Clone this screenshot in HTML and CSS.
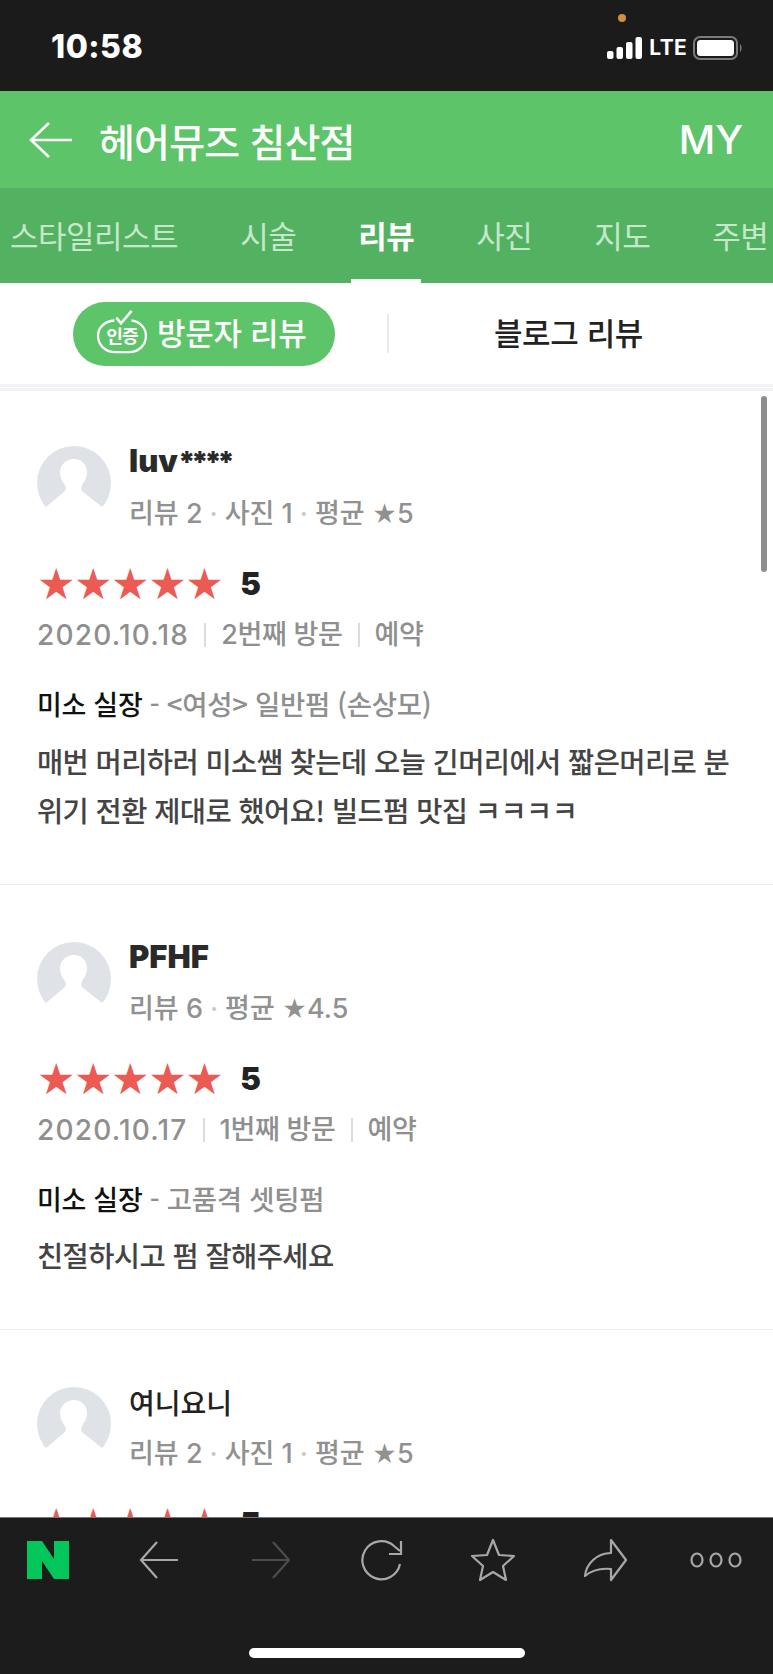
FILE: index.html
```html
<!DOCTYPE html>
<html lang="ko">
<head>
<meta charset="utf-8">
<title>헤어뮤즈 침산점 리뷰</title>
<link rel="stylesheet" href="styles.css">
</head>
<body>
<div class="phone">
  <div class="status">
    <span class="time">10:58</span>
    <span class="dot"></span>
    <div class="status-right">
      <svg class="signal" width="36" height="24" viewBox="0 0 36 24"><rect x="0" y="15" width="6.5" height="8" rx="2"/><rect x="9.5" y="11" width="6.5" height="12" rx="2"/><rect x="19" y="6" width="6.5" height="17" rx="2"/><rect x="28.5" y="1" width="6.5" height="22" rx="2"/></svg>
      <span class="lte">LTE</span>
      <svg class="battery" width="50" height="26" viewBox="0 0 50 26"><rect x="1" y="2" width="43" height="22" rx="6" fill="none" stroke="#7b7b7b" stroke-width="2"/><rect x="4" y="5" width="37" height="16" rx="3.5" fill="#fff"/><path d="M47 9c2 1 2 7 0 8z" fill="#7b7b7b"/></svg>
    </div>
  </div>

  <header class="top">
    <svg class="back" width="46" height="38" viewBox="0 0 46 38"><path d="M44 19H3M21 2 3 19l18 17" fill="none" stroke="#fff" stroke-width="2.6"/></svg>
    <h1 class="title">헤어뮤즈 침산점</h1>
    <span class="my">MY</span>
  </header>

  <nav class="tabs">
    <span class="tab">스타일리스트</span>
    <span class="tab">시술</span>
    <span class="tab active">리뷰</span>
    <span class="tab">사진</span>
    <span class="tab">지도</span>
    <span class="tab">주변</span>
  </nav>

  <div class="switch">
    <div class="switch-side switch-left">
      <div class="pill">
        <svg class="cert" width="54" height="48" viewBox="0 0 54 48"><path d="M21 9 26 15 37 2" fill="none" stroke="#fff" stroke-width="2.6"/><path d="M19 12C8 13 2 20 2 28c0 10 8 17 18 17h14c10 0 18-7 18-17 0-8-6-15-15-16" fill="none" stroke="#fff" stroke-width="2.4"/><text x="27" y="35" class="cert-text">인증</text></svg>
        <span class="pill-label">방문자 리뷰</span>
      </div>
    </div>
    <div class="switch-line"></div>
    <div class="switch-side switch-right"><span class="blog">블로그 리뷰</span></div>
  </div>

  <main class="list">
    <div class="scrollbar"></div>

    <article class="review">
      <div class="user">
        <svg class="avatar" viewBox="0 0 74 74"><circle cx="37" cy="37" r="37" fill="#dfe2e6"/><path d="M37 13c8 0 13 6 13 13 0 6-3 10-5 13-1 2-1 4 0 6l20 16v14H9V61l19-16c1-2 1-4 0-6-2-3-5-7-5-13 0-7 6-13 14-13z" fill="#fff"/></svg>
        <div class="user-info">
          <div class="name heavy">luv<span class="mask">****</span></div>
          <div class="meta">리뷰 2<i>·</i>사진 1<i>·</i>평균 <em>★</em>5</div>
        </div>
      </div>
      <div class="rating"><span class="stars">★★★★★</span><b>5</b></div>
      <div class="visit"><span class="date">2020.10.18</span><span>2번째 방문</span><span>예약</span></div>
      <div class="staff"><b>미소 실장</b> - &lt;여성&gt; 일반펌 (손상모)</div>
      <p class="body">매번 머리하러 미소쌤 찾는데 오늘 긴머리에서 짧은머리로 분위기 전환 제대로 했어요! 빌드펌 맛집 ㅋㅋㅋㅋ</p>
    </article>

    <article class="review">
      <div class="user">
        <svg class="avatar" viewBox="0 0 74 74"><circle cx="37" cy="37" r="37" fill="#dfe2e6"/><path d="M37 13c8 0 13 6 13 13 0 6-3 10-5 13-1 2-1 4 0 6l20 16v14H9V61l19-16c1-2 1-4 0-6-2-3-5-7-5-13 0-7 6-13 14-13z" fill="#fff"/></svg>
        <div class="user-info">
          <div class="name heavy">PFHF</div>
          <div class="meta">리뷰 6<i>·</i>평균 <em>★</em>4.5</div>
        </div>
      </div>
      <div class="rating"><span class="stars">★★★★★</span><b>5</b></div>
      <div class="visit"><span class="date">2020.10.17</span><span>1번째 방문</span><span>예약</span></div>
      <div class="staff"><b>미소 실장</b> - 고품격 셋팅펌</div>
      <p class="body">친절하시고 펌 잘해주세요</p>
    </article>

    <article class="review">
      <div class="user">
        <svg class="avatar" viewBox="0 0 74 74"><circle cx="37" cy="37" r="37" fill="#dfe2e6"/><path d="M37 13c8 0 13 6 13 13 0 6-3 10-5 13-1 2-1 4 0 6l20 16v14H9V61l19-16c1-2 1-4 0-6-2-3-5-7-5-13 0-7 6-13 14-13z" fill="#fff"/></svg>
        <div class="user-info">
          <div class="name">여니요니</div>
          <div class="meta">리뷰 2<i>·</i>사진 1<i>·</i>평균 <em>★</em>5</div>
        </div>
      </div>
      <div class="rating"><span class="stars">★★★★★</span><b>5</b></div>
    </article>
  </main>

  <footer class="bottom">
    <div class="toolbar">
      <span class="tool"><svg width="42" height="38" viewBox="0 0 42 38"><path d="M0 0h15l12 18V0h15v38H27L15 20v18H0z" fill="#03c75a"/></svg></span>
      <span class="tool"><svg width="40" height="40" viewBox="0 0 40 40"><path d="M39 20H2M18 2 2 20l16 18" fill="none" stroke="#a8a8a8" stroke-width="2.2"/></svg></span>
      <span class="tool"><svg width="40" height="40" viewBox="0 0 40 40"><path d="M1 20h37M22 2l16 18-16 18" fill="none" stroke="#4c4c4c" stroke-width="2.2"/></svg></span>
      <span class="tool"><svg width="44" height="44" viewBox="0 0 44 44"><path d="M40 26a19 19 0 1 1-6-18l6 5" fill="none" stroke="#a8a8a8" stroke-width="2.2"/><path d="M41 3v13H29" fill="none" stroke="#a8a8a8" stroke-width="2.2"/></svg></span>
      <span class="tool"><svg width="46" height="44" viewBox="0 0 46 44"><path d="M23 2l6 15 15 1-11 10 3 14-13-8-13 8 3-14L2 18l15-1z" fill="none" stroke="#a8a8a8" stroke-width="2.2" stroke-linejoin="round"/></svg></span>
      <span class="tool"><svg width="46" height="44" viewBox="0 0 46 44"><path d="M29 2l15 20-15 20V31c-10-1-19 1-26 7 1-12 12-23 26-23z" fill="none" stroke="#a8a8a8" stroke-width="2.2" stroke-linejoin="round"/></svg></span>
      <span class="tool"><svg width="52" height="16" viewBox="0 0 52 16"><g fill="none" stroke="#a8a8a8" stroke-width="2.2"><ellipse cx="7" cy="8" rx="5.5" ry="6.5"/><ellipse cx="26" cy="8" rx="5.5" ry="6.5"/><ellipse cx="45" cy="8" rx="5.5" ry="6.5"/></g></svg></span>
    </div>
    <div class="home"></div>
  </footer>
</div>
</body>
</html>
```

FILE: styles.css
```css
* { box-sizing: border-box; }
html, body { margin: 0; padding: 0; }
body {
  width: 773px;
  height: 1674px;
  overflow: hidden;
  font-family: "Noto Sans CJK KR", "Noto Sans", sans-serif;
  color: #222;
  background: #fff;
}
.phone { display: flex; flex-direction: column; height: 1674px; position: relative; }

.status {
  height: 91px;
  background: #1b1b1b;
  color: #fff;
  display: flex;
  align-items: center;
  justify-content: space-between;
  padding: 0 30px 0 51px;
  flex: none;
}
.time { font: 800 32px "Inter", sans-serif; letter-spacing: 0.5px; position: relative; top: 1px; }
.dot { position: absolute; left: 618px; top: 14px; width: 8px; height: 8px; border-radius: 50%; background: #d18f3f; }
.status-right { display: flex; align-items: center; gap: 6px; position: relative; top: 2px; }
.signal { fill: #fff; }
.lte { font: 700 21px "Inter", sans-serif; letter-spacing: 0.3px; }

.top {
  height: 97px;
  background: #5dc469;
  display: flex;
  align-items: center;
  padding: 0 30px 0 28px;
  color: #fff;
  flex: none;
}
.back { flex: none; }
.title { margin: 0 0 0 25px; font-size: 39px; font-weight: 500; flex: 1; letter-spacing: -0.8px; }
.my { font: 500 40px "Inter", sans-serif; }

.tabs {
  height: 95px;
  background: #53b262;
  display: flex;
  align-items: center;
  gap: 62px;
  padding: 0 0 0 10px;
  flex: none;
  overflow: hidden;
  white-space: nowrap;
}
.tab {
  color: #c7e7cb;
  font-size: 31px;
  line-height: 93px;
  height: 95px;
  position: relative;
  flex: none;
  letter-spacing: -0.5px;
}
.tab.active { color: #fff; font-weight: 700; }
.tab.active::after {
  content: "";
  position: absolute;
  left: -7px;
  right: -7px;
  bottom: 0;
  height: 4px;
  background: #fff;
}

.switch {
  height: 104px;
  display: flex;
  align-items: center;
  flex: none;
  border-bottom: 3px solid #f3f3f6;
}
.switch-side { flex: 1; display: flex; }
.switch-left { flex: none; width: 387px; padding-left: 73px; }
.switch-right { padding-left: 105px; }
.switch-line { width: 2px; height: 39px; background: #eaeaea; flex: none; }
.pill {
  width: 262px;
  height: 64px;
  border-radius: 32px;
  background: #5dc469;
  color: #fff;
  font-size: 31px;
  font-weight: 500;
  display: flex;
  align-items: center;
  padding-left: 22px;
  gap: 8px;
  letter-spacing: -0.3px;
}
.pill-label { padding-bottom: 4px; }
.cert { width: 54px; height: 46px; position: relative; top: -2px; flex: none; }
.cert-text { font-size: 19px; font-weight: 700; fill: #fff; text-anchor: middle; letter-spacing: -1px; }
.blog { font-size: 31px; font-weight: 500; color: #222; letter-spacing: -0.4px; padding-bottom: 4px; }

.list { flex: 1; overflow: hidden; position: relative; margin-top: 1px; border-top: 3px solid #f2f3f6; min-height: 0; }
.scrollbar {
  position: absolute;
  right: 6px;
  top: 5px;
  width: 6px;
  height: 176px;
  border-radius: 3px;
  background: #8e8e8e;
}
.review { padding: 57px 36px 50px 37px; border-top: 1px solid #eceef0; }
.review:first-of-type { padding-top: 55px; border-top: 0; }

.user { display: flex; gap: 18px; }
.avatar { width: 74px; height: 74px; flex: none; display: block; }
.user-info { margin-top: -1px; }
.name { font-size: 28px; line-height: 32px; font-weight: 500; color: #222; }
.name.heavy { font: 900 31px/32px "Inter", sans-serif; color: #2a2a2a; }
.mask { font-size: 29px; letter-spacing: -4.5px; }
.meta { font-family: "Inter", "Noto Sans CJK KR", sans-serif; font-size: 27px; font-weight: 500; line-height: 32px; color: #919191; margin-top: 20px; }
.meta i { font-style: normal; color: #c9c9c9; margin: 0 7px; }
.meta em { font-style: normal; font-size: 24px; }

.rating { display: flex; align-items: center; margin-top: 31px; height: 44px; }
.stars { color: #ec5a54; font: 43px/44px "DejaVu Sans", sans-serif; letter-spacing: -1.5px; }
.rating b { font: 900 31px/44px "Inter", sans-serif; color: #222; margin-left: 18px; }

.visit { display: flex; align-items: center; font-family: "Inter", "Noto Sans CJK KR", sans-serif; font-size: 27px; font-weight: 500; line-height: 40px; color: #8f8f8f; margin-top: 9px; letter-spacing: -0.3px; }
.visit .date { font-size: 28px; letter-spacing: 1.2px; }
.visit span + span { margin-left: 15px; padding-left: 17px; background: linear-gradient(#dcdcdc, #dcdcdc) left center / 2px 24px no-repeat; }

.staff { font-size: 27.5px; font-weight: 500; line-height: 40px; color: #8f8f8f; margin-top: 28px; letter-spacing: -0.3px; }
.staff b { color: #111; font-weight: 500; font-size: 27px; }
.body { margin: 11.5px 0 0; font-size: 28.5px; font-weight: 500; line-height: 49px; color: #444; letter-spacing: -0.6px; }

.bottom {
  position: absolute;
  left: 0;
  right: 0;
  bottom: 0;
  height: 157px;
  background: #1c1c1c;
  border-top: 1px solid #777;
}
.toolbar {
  display: flex;
  align-items: center;
  justify-content: space-between;
  padding: 0 9px 0 0;
  height: 84px;
}
.tool { width: 96px; display: flex; justify-content: center; }
.home {
  width: 276px;
  height: 10px;
  border-radius: 5px;
  background: #fff;
  margin: 46px auto 0;
}
```
